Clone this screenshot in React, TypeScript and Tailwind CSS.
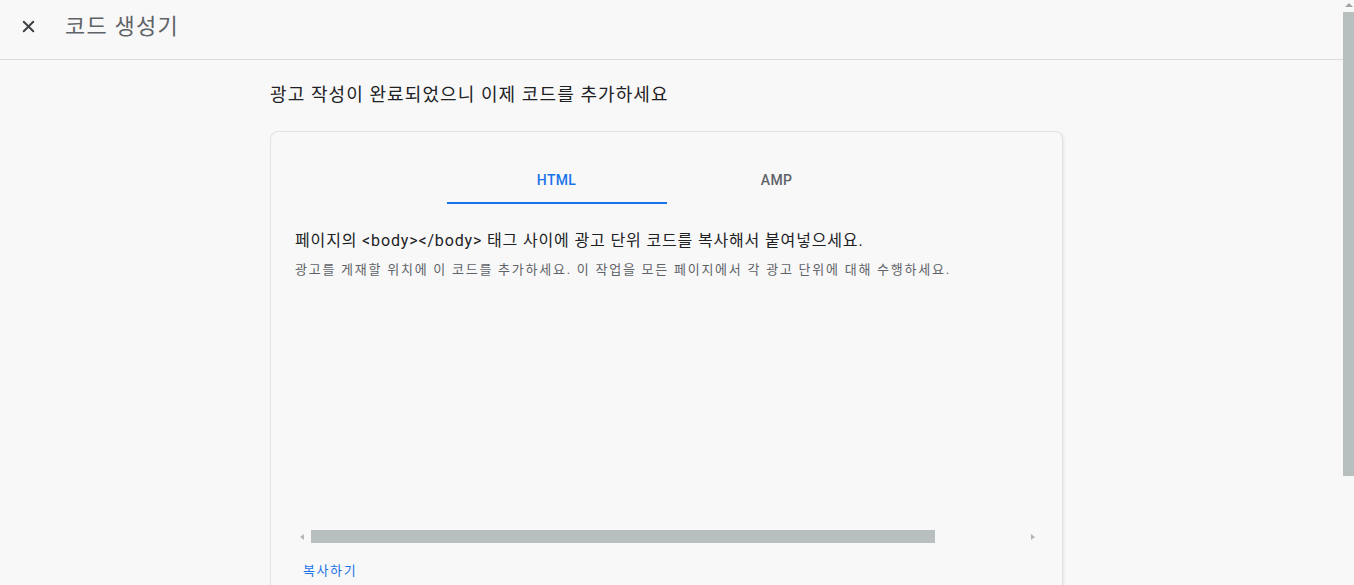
import { X } from "lucide-react";

const font = "font-['Roboto','Noto_Sans_CJK_KR',sans-serif]";

function Tabs() {
  return (
    <div className="flex justify-center">
      <button className="w-[220px] h-[48px] flex flex-col">
        <span className="flex-1 flex items-center justify-center pt-[3px] text-[14px] font-medium text-[#1a73e8] tracking-[0.3px]">
          HTML
        </span>
        <span className="h-[2px] bg-[#1a73e8]" />
      </button>
      <button className="w-[220px] h-[48px] flex flex-col">
        <span className="flex-1 flex items-center justify-center pt-[3px] text-[14px] font-medium text-[#5f6368] tracking-[0.3px]">
          AMP
        </span>
        <span className="h-[2px]" />
      </button>
    </div>
  );
}

function HScrollbar() {
  return (
    <div className="flex items-center h-[13px] pl-[29px] pr-[27px] mt-[251px]">
      <span className="w-0 h-0 border-y-[3px] border-y-transparent border-r-[4px] border-r-[#b5b5b5]" />
      <div className="flex-1 flex items-center mx-[7px] h-[13px]">
        <div className="w-[624px] h-[13px] bg-[#b8c0bf]" />
      </div>
      <span className="w-0 h-0 border-y-[3px] border-y-transparent border-l-[4px] border-l-[#b5b5b5]" />
    </div>
  );
}

export default function App() {
  return (
    <div className={`h-[585px] w-[1354px] overflow-hidden flex bg-[#f8f8f8] ${font}`}>
      <div className="flex-1 flex flex-col">
        {/* Header */}
        <header className="h-[60px] shrink-0 flex items-center border-b border-[#dadce0] pl-[19px] pb-[6px]">
          <X className="w-[19px] h-[19px] text-[#3c4043]" strokeWidth={2.5} />
          <h1 className="ml-[27px] text-[22px] tracking-[1.2px] text-[#5f6368] leading-none">코드 생성기</h1>
        </header>

        <main className="ml-[270px] w-[793px] flex flex-col">
          <h2 className="mt-[23px] h-[24px] leading-[24px] text-[18px] tracking-[1.1px] text-[#202124]">
            광고 작성이 완료되었으니 이제 코드를 추가하세요
          </h2>

          <section className="mt-[24px] rounded-t-[8px] border border-b-0 border-[#e3e3e3] shadow-[1px_1px_3px_rgba(0,0,0,0.08)] pt-[24px] h-[480px]">
            <Tabs />

            <div className="px-[24px] pt-[26px]">
              <p className="text-[16px] leading-[22px] tracking-[0.85px] text-[#202124] whitespace-nowrap">
                페이지의 &lt;body&gt;&lt;/body&gt; 태그 사이에 광고 단위 코드를 복사해서 붙여넣으세요.
              </p>
              <p className="mt-[9px] text-[13px] leading-[18px] tracking-[1.75px] text-[#5f6368] whitespace-nowrap">
                광고를 게재할 위치에 이 코드를 추가하세요. 이 작업을 모든 페이지에서 각 광고 단위에 대해 수행하세요.
              </p>
            </div>

            <HScrollbar />

            <button className="mt-[19px] ml-[32px] text-[13px] leading-[18px] tracking-[1.6px] text-[#1a73e8]">
              복사하기
            </button>
          </section>
        </main>
      </div>

      {/* Page scrollbar */}
      <div className="w-[11px] flex flex-col items-center">
        <span className="mt-[3px] w-0 h-0 border-x-[4px] border-x-transparent border-b-[4px] border-b-[#a3a3a3]" />
        <div className="mt-[5px] w-full h-[464px] bg-[#b8c0bf]" />
      </div>
    </div>
  );
}
